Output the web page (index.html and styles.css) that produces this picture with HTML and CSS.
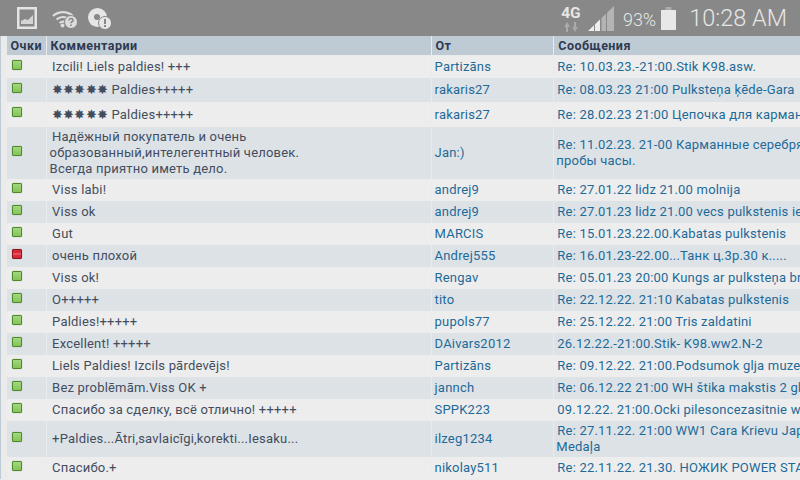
FILE: index.html
```html
<!DOCTYPE html>
<html lang="ru">
<head>
<meta charset="utf-8">
<title>Отзывы</title>
<link rel="stylesheet" href="styles.css">
</head>
<body>
<header class="status">
  <div class="status-left">
    <svg class="ic-img" width="20" height="22" viewBox="0 0 20 22"><path fill="#e4e4e4" fill-rule="evenodd" d="M0 0h20v22H0zM2.500 2.500v17h15v-17z"/><path fill="#d4d4d4" d="M4 17v-3l4-2 3 1 5-5v9z"/></svg>
    <svg class="ic-wifi" width="25" height="19" viewBox="0 0 25 19"><path fill="none" stroke="#dcdcdc" stroke-width="2.200" d="M1 7A15 15 0 0 1 21 7M4.500 10.500A10.500 10.500 0 0 1 17 10M7.500 14A6 6 0 0 1 14 13.500"/><circle cx="10.500" cy="16.500" r="2" fill="#dcdcdc"/><circle cx="19" cy="13" r="6.500" fill="#dcdcdc" stroke="#888"/><path fill="none" stroke="#888" stroke-width="1.600" d="M17 11.500q.3-2 2-2t2 1.700q0 1-1 1.500t-1 1.500M19 15.500v1.500"/></svg>
    <svg class="ic-disc" width="23" height="21" viewBox="0 0 23 21"><circle cx="9.500" cy="9.500" r="9.500" fill="#e6e6e6"/><circle cx="9" cy="9" r="3" fill="#888"/><circle cx="17" cy="15" r="6.500" fill="#e6e6e6" stroke="#888"/><path stroke="#888" stroke-width="2" d="M17 11v5M17 17v2"/></svg>
  </div>
  <div class="status-right">
    <div class="net"><span class="net-label">4G</span><svg width="14" height="10" viewBox="0 0 14 10"><path fill="#aaa" d="M0 5l3-5 3 5H4v5H2V5zM8 5h2V0h2v5h2l-3 5z"/></svg></div>
    <svg class="signal" width="26" height="25" viewBox="0 0 26 25"><path fill="#eee" d="M0 25L6 19.200V25zM7 25V18.300L12 13.500V25z"/><path fill="#b4b4b4" d="M13.500 25V12L18 7.700V25zM19 25V6.800L26 0V25z"/></svg>
    <span class="pct">93%</span>
    <svg class="battery" width="15" height="23" viewBox="0 0 15 23"><path fill="#aaa" d="M4.500 0h6v3h-6z"/><path fill="#e8e8e8" d="M0 3h15v20H0z"/></svg>
    <span class="clock">10:28 AM</span>
  </div>
</header>
<main class="content">
<table class="feedback">
  <colgroup><col class="c1"><col class="c2"><col class="c3"><col class="c4"></colgroup>
  <thead><tr><th>Очки</th><th>Комментарии</th><th>От</th><th>Сообщения</th></tr></thead>
  <tbody>
    <tr><td><i class="pt"></i></td><td>Izcili! Liels paldies! +++</td><td><a>Partizāns</a></td><td><a>Re: 10.03.23.-21:00.Stik K98.asw.</a></td></tr>
    <tr class="r2"><td><i class="pt"></i></td><td>✸✸✸✸✸ Paldies+++++</td><td><a>rakaris27</a></td><td><a>Re: 08.03.23 21:00 Pulksteņa ķēde-Gara</a></td></tr>
    <tr class="r3"><td><i class="pt"></i></td><td>✸✸✸✸✸ Paldies+++++</td><td><a>rakaris27</a></td><td><a>Re: 28.02.23 21:00 Цепочка для карманных часов</a></td></tr>
    <tr><td><i class="pt"></i></td><td>Надёжный покупатель и очень<br>образованный,интелегентный человек.<br>Всегда приятно иметь дело.</td><td><a>Jan:)</a></td><td><a>Re: 11.02.23. 21-00 Карманные серебряные часы.<br>пробы часы.</a></td></tr>
    <tr><td><i class="pt"></i></td><td>Viss labi!</td><td><a>andrej9</a></td><td><a>Re: 27.01.22 lidz 21.00 molnija</a></td></tr>
    <tr><td><i class="pt"></i></td><td>Viss ok</td><td><a>andrej9</a></td><td><a>Re: 27.01.23 lidz 21.00 vecs pulkstenis ieri</a></td></tr>
    <tr><td><i class="pt"></i></td><td>Gut</td><td><a>MARCIS</a></td><td><a>Re: 15.01.23.22.00.Kabatas pulkstenis</a></td></tr>
    <tr><td><i class="pt neg"></i></td><td>очень плохой</td><td><a>Andrej555</a></td><td><a>Re: 16.01.23-22.00...Танк ц.3р.30 к.....</a></td></tr>
    <tr><td><i class="pt"></i></td><td>Viss ok!</td><td><a>Rengav</a></td><td><a>Re: 05.01.23 20:00 Kungs ar pulksteņa brāli</a></td></tr>
    <tr><td><i class="pt"></i></td><td>O+++++</td><td><a>tito</a></td><td><a>Re: 22.12.22. 21:10 Kabatas pulkstenis</a></td></tr>
    <tr><td><i class="pt"></i></td><td>Paldies!+++++</td><td><a>pupols77</a></td><td><a>Re: 25.12.22. 21:00 Tris zaldatini</a></td></tr>
    <tr><td><i class="pt"></i></td><td>Excellent! +++++</td><td><a>DAivars2012</a></td><td><a>26.12.22.-21:00.Stik- K98.ww2.N-2</a></td></tr>
    <tr><td><i class="pt"></i></td><td>Liels Paldies! Izcils pārdevējs!</td><td><a>Partizāns</a></td><td><a>Re: 09.12.22. 21:00.Podsumok glja muzeja</a></td></tr>
    <tr><td><i class="pt"></i></td><td>Bez problēmām.Viss OK +</td><td><a>jannch</a></td><td><a>Re: 06.12.22 21:00 WH štika makstis 2 gb.</a></td></tr>
    <tr><td><i class="pt"></i></td><td>Спасибо за сделку, всё отлично! +++++</td><td><a>SPPK223</a></td><td><a>09.12.22. 21:00.Ocki pilesoncezasitnie wk</a></td></tr>
    <tr><td><i class="pt"></i></td><td>+Paldies...Ātri,savlaicīgi,korekti...Iesaku...</td><td><a>ilzeg1234</a></td><td><a>Re: 27.11.22. 21:00 WW1 Cara Krievu Japāņu<br>Medaļa</a></td></tr>
    <tr><td><i class="pt"></i></td><td>Спасибо.+</td><td><a>nikolay511</a></td><td><a>Re: 22.11.22. 21.30. НОЖИК POWER STAR</a></td></tr>
  </tbody>
</table>
</main>
</body>
</html>
```
FILE: styles.css
```css
html, body { margin: 0; padding: 0; }
body { width: 800px; height: 480px; overflow: hidden; background: #ebebeb; font-family: Roboto, sans-serif; }
.status { height: 36px; background: #888; display: flex; justify-content: space-between; align-items: center; }
.status-left { display: flex; align-items: center; padding-left: 17px; }
.ic-wifi { margin-left: 15px; margin-top: 0; }
.ic-disc { margin-left: 11px; margin-top: 1px; }
.status-right { display: flex; align-items: center; padding-right: 13px; color: #e6e6e6; }
.net { display: flex; flex-direction: column; align-items: center; width: 20px; margin-right: 7px; margin-top: 3px; }
.net-label { font-size: 15.500px; font-weight: 700; line-height: 13px; }
.net svg { margin-top: 2px; }
.signal { margin-right: 9px; }
.pct { font-size: 18px; font-weight: 300; margin-top: 2px; margin-right: 5px; }
.battery { margin-right: 13px; }
.clock { font-size: 23.500px; font-weight: 300; }
.content { width: 900px; border-left: 1px solid #bfcbd4; box-sizing: border-box; padding-left: 6px; }
.feedback { border-collapse: separate; border-spacing: 1.500px 0; table-layout: fixed; width: 1000px; margin-left: -1.500px; font-size: 13px; color: #434d5e; letter-spacing: .2px; }
.c1 { width: 39px; } .c2 { width: 383px; } .c3 { width: 121.500px; } .c4 { width: 449px; }
th { background: #bfcbd4; color: #2e3a50; font-weight: 700; font-size: 12.500px; letter-spacing: .45px; text-align: left; padding: 0 0 1px 4px; box-sizing: border-box; border-bottom: 1px solid #ebebeb; height: 20px; background-clip: padding-box; }
td { padding: 2px 2px; line-height: 16px; height: 18px; text-indent: 1px; }
td:nth-child(2) { padding-left: 3px; text-indent: 2.500px; }
td:first-child { padding-left: 5px; text-indent: 0; }
.r2 td { height: 20px; }
.r3 td { height: 21px; }
tbody tr:nth-child(odd) td { background: #ededed; }
tbody tr:nth-child(even) td { background: #dde2e7; }
a { color: #1d6a98; }
.pt { display: block; width: 8px; height: 8px; background: linear-gradient(#a4d880, #84c458); border: 1px solid #4f8a2c; border-radius: 1px; box-shadow: 0 0 1px #7a9a60; margin-bottom: 5px; }
.neg { background: linear-gradient(#d82838 30%, #f06070 50%, #d82838 70%); border-color: #8c1520; }
```
